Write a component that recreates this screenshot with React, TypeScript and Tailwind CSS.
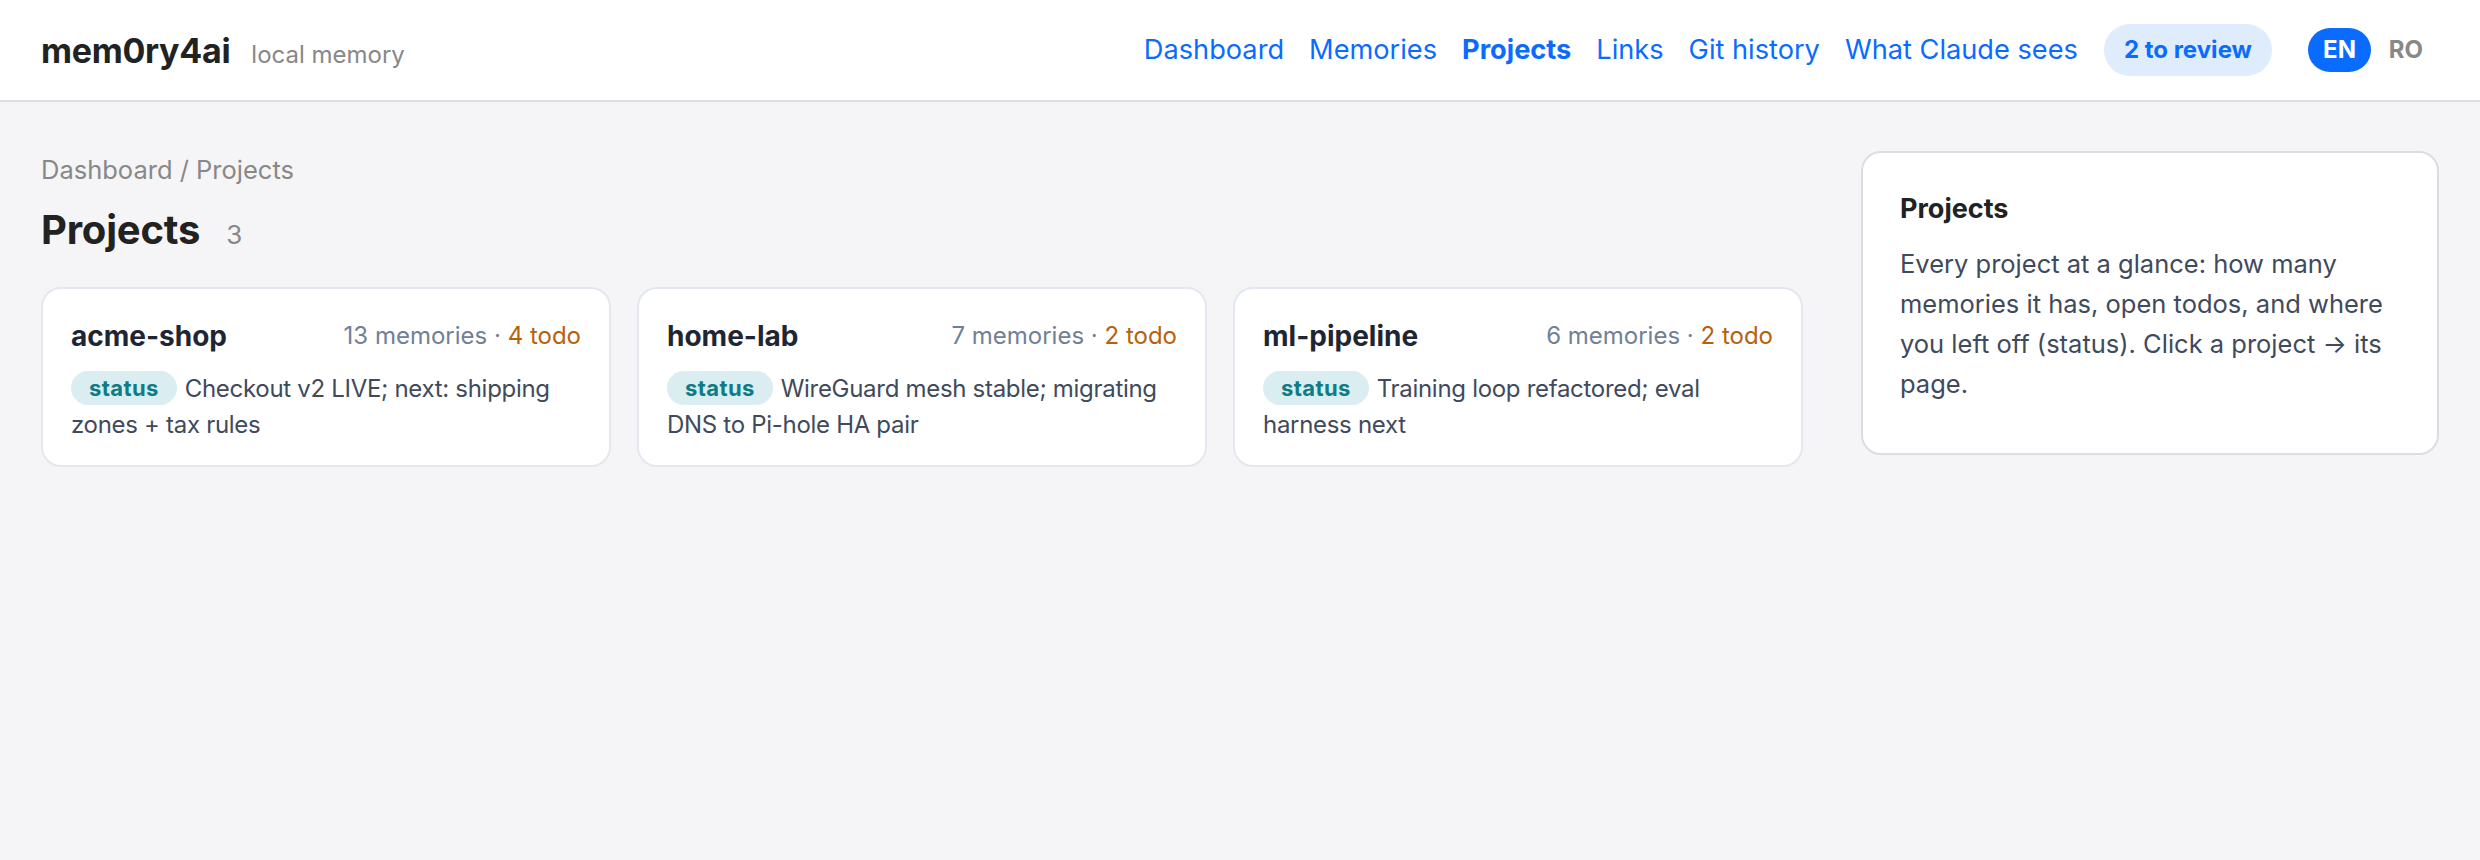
import React from 'react';

const projects = [
  { name: 'acme-shop', memories: 13, todo: 4, status: 'Checkout v2 LIVE; next: shipping zones + tax rules' },
  { name: 'home-lab', memories: 7, todo: 2, status: 'WireGuard mesh stable; migrating DNS to Pi-hole HA pair' },
  { name: 'ml-pipeline', memories: 6, todo: 2, status: 'Training loop refactored; eval harness next' },
];

const navLinks = ['Dashboard', 'Memories', 'Projects', 'Links', 'Git history', 'What Claude sees'];

export default function App() {
  return (
    <div className="min-h-screen bg-[#f5f5f7] font-['Inter','Liberation_Sans',sans-serif]">
      {/* Header */}
      <header className="h-[102px] bg-white border-b-[2px] border-[#dcdce2] flex items-center justify-between pl-[41px] pr-[39px]">
        <div className="flex items-baseline gap-[21px]">
          <span className="text-[34px] font-bold text-[#222] tracking-[-0.3px]">mem0ry4ai</span>
          <span className="text-[24px] text-[#888]">local memory</span>
        </div>
        <nav className="flex items-center">
          <div className="flex items-center gap-[25px] mr-[26px]">
            {navLinks.map((l) => (
              <a
                key={l}
                href="#"
                className={`text-[27.2px] text-[#0a6cff] ${l === 'Projects' ? 'font-bold' : ''}`}
              >
                {l}
              </a>
            ))}
          </div>
          <span className="h-[52px] px-[20px] rounded-full bg-[#dfecfc] text-[#0a6cff] text-[24px] font-bold flex items-center">
            2 to review
          </span>
          <div className="flex items-center ml-[36px]">
            <button className="h-[44px] w-[63px] rounded-full bg-[#0a6cff] text-white text-[24px] font-bold">EN</button>
            <button className="h-[44px] w-[70px] text-[#888] text-[24px] font-bold">RO</button>
          </div>
        </nav>
      </header>

      {/* Body */}
      <div className="flex gap-[58px] px-[41px] pt-[49px]">
        <main className="flex-1">
          <div className="text-[25.5px] text-[#888]">Dashboard / Projects</div>
          <div className="flex items-baseline gap-[26px] mt-[11px]">
            <h1 className="text-[40px] font-bold text-[#222] tracking-[-0.2px]">Projects</h1>
            <span className="text-[26px] text-[#888]">3</span>
          </div>
          <div className="grid grid-cols-3 gap-[26px] mt-[27px]">
            {projects.map((p) => (
              <div key={p.name} className="bg-white border-[2px] border-[#e3e8f0] rounded-[20px] pt-[26px] pb-[22px] px-[28px]">
                <div className="flex items-center justify-between">
                  <span className="text-[28px] font-bold text-[#1e2533]">{p.name}</span>
                  <span className="text-[24px]">
                    <span className="text-[#718096]">{p.memories} memories · </span>
                    <span className="text-[#b7610b]">{p.todo} todo</span>
                  </span>
                </div>
                <div className="mt-[14px] text-[24px] leading-[36px] tracking-[-0.3px] text-[#3f4a5c]">
                  <span className="inline-block h-[34px] leading-[34px] px-[18px] mr-[8px] rounded-full bg-[#daedf0] text-[#0e7c86] text-[22px] font-bold tracking-[0.4px] align-top">
                    status
                  </span>
                  <span>{p.status}</span>
                </div>
              </div>
            ))}
          </div>
        </main>

        <aside className="w-[578px] shrink-0">
          <div className="bg-white border-[2px] border-[#dcdce2] rounded-[20px] pt-[36px] pb-[49px] pl-[37px] pr-[40px]">
            <h2 className="text-[27px] font-bold text-[#222]">Projects</h2>
            <p className="mt-[14px] text-[25.5px] leading-[40px] text-[#3f4a5c]">
              Every project at a glance: how many memories it has, open todos, and where you left off (status). Click a project → its page.
            </p>
          </div>
        </aside>
      </div>
    </div>
  );
}
